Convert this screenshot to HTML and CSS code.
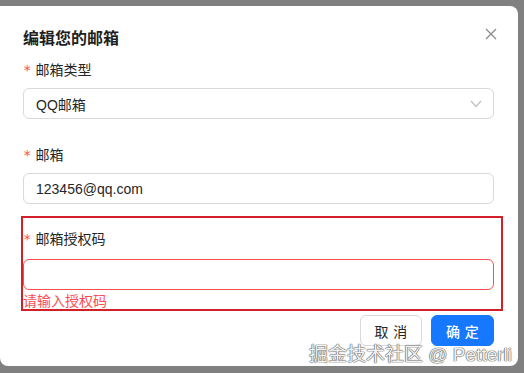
FILE: index.html
```html
<!DOCTYPE html>
<html>

<head>
    <title>编辑您的邮箱</title>
    <link rel="stylesheet" href="styles.css">
</head>

<body>
    <div class="modal">
        <div class="modal-header">
            <span class="modal-title">编辑您的邮箱</span>
            <span class="modal-close">
                <svg width="12" height="12" viewBox="0 0 12 12">
                    <path d="M1 1 L11 11 M11 1 L1 11" stroke="#8c8c8c" stroke-width="1.3" fill="none" />
                </svg>
            </span>
        </div>

        <div class="modal-body">
            <div class="form-item">
                <div class="form-label"><span class="required">*</span>邮箱类型</div>
                <div class="input select">
                    <span>QQ邮箱</span>
                    <svg class="arrow" width="12" height="8" viewBox="0 0 12 8">
                        <path d="M1 1 L6 6.5 L11 1" stroke="#bfbfbf" stroke-width="1.2" fill="none" />
                    </svg>
                </div>
            </div>

            <div class="form-item">
                <div class="form-label"><span class="required">*</span>邮箱</div>
                <div class="input">123456@qq.com</div>
            </div>

            <div class="form-item highlight">
                <div class="form-label"><span class="required">*</span>邮箱授权码</div>
                <div class="input error"></div>
                <div class="form-error">请输入授权码</div>
            </div>
        </div>

        <div class="modal-footer">
            <button class="btn">取消</button>
            <button class="btn btn-primary">确定</button>
        </div>
    </div>

    <div class="watermark">掘金技术社区 @ Petterli</div>
</body>

</html>
```

FILE: styles.css
```css
body {
    margin: 0;
    background-color: #808080;
    font-family: "Liberation Sans", "Noto Sans CJK SC", sans-serif;
    width: 524px;
    height: 373px;
    overflow: hidden;
    position: relative;
}

.modal {
    margin-top: 6px;
    width: 518px;
    height: 360px;
    background-color: #fff;
    border-radius: 0 8px 8px 8px;
    box-sizing: border-box;
    padding: 0 24px 0 23px;
}

.modal-header {
    display: flex;
    justify-content: space-between;
    align-items: center;
    padding-top: 19px;
    height: 28px;
}

.modal-title {
    font-size: 16px;
    font-weight: 600;
    color: #1f1f1f;
    line-height: 28px;
}

.modal-close {
    display: flex;
    margin-right: -3px;
    margin-top: -10px;
}

.modal-body {
    padding-top: 6px;
}

.form-item {
    margin-bottom: 25px;
}

.form-label {
    font-size: 14px;
    line-height: 22px;
    color: #262626;
    margin-bottom: 7px;
}

.required {
    color: #ff4d4f;
    font-family: "DejaVu Sans Mono", monospace;
    margin-right: 4px;
}

.input {
    height: 31px;
    box-sizing: border-box;
    border: 1px solid #d9d9d9;
    border-radius: 6px;
    padding: 0 12px;
    display: flex;
    align-items: center;
    font-size: 14px;
    color: #262626;
}

.select {
    justify-content: space-between;
}

.select .arrow {
    margin-right: -1px;
}

.input.error {
    border-color: #ff4d4f;
}

.form-error {
    color: #ff4d4f;
    font-size: 14px;
    line-height: 16px;
    margin-top: 3px;
}

/* red frame drawn round the failing field */
.highlight {
    border: 2px solid #d32028;
    margin: -13px -9px 0 -2px;
    padding: 10px 7px 0 0;
}

.highlight .form-label {
    margin-bottom: 9px;
}

.modal-footer {
    display: flex;
    justify-content: flex-end;
    gap: 9px;
    margin-top: 4px;
}

.btn {
    height: 31px;
    width: 62px;
    border: 1px solid #d9d9d9;
    border-radius: 6px;
    background-color: #fff;
    color: #262626;
    font-family: "Noto Sans CJK SC", sans-serif;
    font-size: 14px;
    letter-spacing: 0.34em;
    padding: 0 0 0 0.34em;
}

.btn-primary {
    width: 63px;
    background-color: #1677ff;
    border-color: #1677ff;
    color: #fff;
    font-weight: 500;
}

.watermark {
    position: absolute;
    right: 12px;
    top: 339px;
    font-family: "Liberation Sans", "Noto Sans CJK SC", sans-serif;
    font-size: 19px;
    color: #f2f2f2;
    text-shadow: 0 0 1px #555, 0 0 1px #555, 0 0 1px #555;
}
```
